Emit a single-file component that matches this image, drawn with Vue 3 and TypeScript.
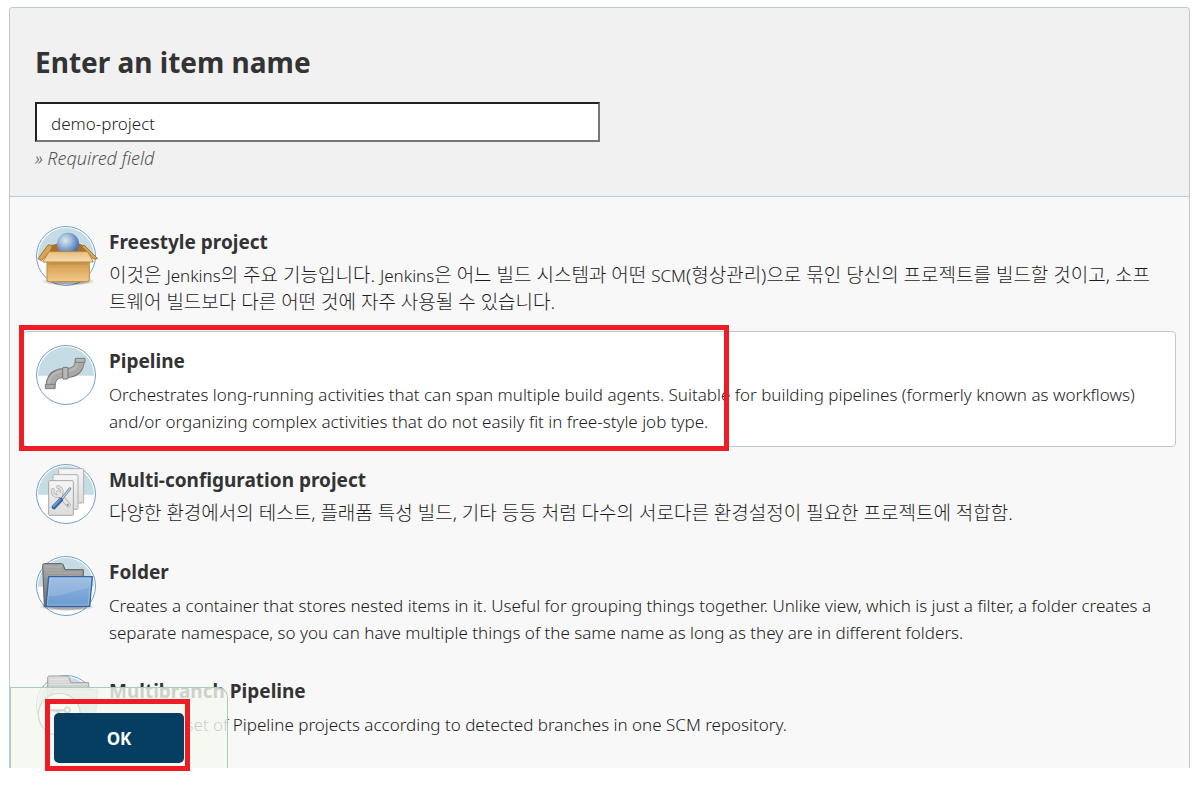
<script setup lang="ts">
import { ref } from 'vue'

type IconName = 'freestyle' | 'pipeline' | 'matrix' | 'folder' | 'multibranch'

interface ItemType {
  id: IconName
  title: string
  lang: 'en' | 'ko'
  description: string
}

const itemName = ref('demo-project')
const selected = ref<IconName>('pipeline')

const itemTypes: ItemType[] = [
  {
    id: 'freestyle',
    title: 'Freestyle project',
    lang: 'ko',
    description:
      '이것은 Jenkins의 주요 기능입니다. Jenkins은 어느 빌드 시스템과 어떤 SCM(형상관리)으로 묶인 당신의 프로젝트를 빌드할 것이고, 소프트웨어 빌드보다 다른 어떤 것에 자주 사용될 수 있습니다.',
  },
  {
    id: 'pipeline',
    title: 'Pipeline',
    lang: 'en',
    description:
      'Orchestrates long-running activities that can span multiple build agents. Suitable for building pipelines (formerly known as workflows) and/or organizing complex activities that do not easily fit in free-style job type.',
  },
  {
    id: 'matrix',
    title: 'Multi-configuration project',
    lang: 'ko',
    description:
      '다양한 환경에서의 테스트, 플래폼 특성 빌드, 기타 등등 처럼 다수의 서로다른 환경설정이 필요한 프로젝트에 적합함.',
  },
  {
    id: 'folder',
    title: 'Folder',
    lang: 'en',
    description:
      'Creates a container that stores nested items in it. Useful for grouping things together. Unlike view, which is just a filter, a folder creates a separate namespace, so you can have multiple things of the same name as long as they are in different folders.',
  },
  {
    id: 'multibranch',
    title: 'Multibranch Pipeline',
    lang: 'en',
    description: 'Creates a set of Pipeline projects according to detected branches in one SCM repository.',
  },
]

// Latin words inside Korean copy are set one step smaller than the Hangul.
const runs = (item: ItemType): string[] =>
  item.lang === 'ko' ? item.description.split(/([A-Za-z]+)/) : [item.description]
</script>

<template>
  <form class="panel" @submit.prevent>
    <header class="head">
      <h1><label for="item-name">Enter an item name</label></h1>
      <input id="item-name" v-model="itemName" class="name" type="text" aria-describedby="name-hint" />
      <p id="name-hint" class="hint">» Required field</p>
    </header>

    <ul class="types">
      <li v-for="item in itemTypes" :key="item.id" class="type" :class="{ active: item.id === selected }">
        <label class="choice">
          <input v-model="selected" class="radio" type="radio" name="mode" :value="item.id" />
          <svg class="icon" viewBox="0 0 180 180" aria-hidden="true">
            <defs>
              <linearGradient id="box-body" x1="0" y1="0" x2="0" y2="1">
                <stop offset="0" stop-color="#c8964c" />
                <stop offset="0.35" stop-color="#dda85c" />
                <stop offset="1" stop-color="#f0c98c" />
              </linearGradient>
              <linearGradient id="box-flap" x1="0" y1="0" x2="0" y2="1">
                <stop offset="0" stop-color="#e8be80" />
                <stop offset="1" stop-color="#f6dcb0" />
              </linearGradient>
              <radialGradient id="ball" cx="0.38" cy="0.35" r="0.68">
                <stop offset="0" stop-color="#e0e8ea" />
                <stop offset="0.4" stop-color="#9fbbdc" />
                <stop offset="1" stop-color="#3c6ab0" />
              </radialGradient>
              <linearGradient id="folder-front" x1="0" y1="0" x2="0" y2="1">
                <stop offset="0" stop-color="#92b5dd" />
                <stop offset="1" stop-color="#6b9bd0" />
              </linearGradient>
              <linearGradient id="folder-back" x1="0" y1="0" x2="0" y2="1">
                <stop offset="0" stop-color="#a8a8a8" />
                <stop offset="1" stop-color="#707070" />
              </linearGradient>
              <linearGradient id="page" x1="0" y1="0" x2="0" y2="1">
                <stop offset="0" stop-color="#f6f6f6" />
                <stop offset="1" stop-color="#dcdcdc" />
              </linearGradient>
              <linearGradient id="branch-folder" x1="0" y1="0" x2="0" y2="1">
                <stop offset="0" stop-color="#dedede" />
                <stop offset="1" stop-color="#a4a4a4" />
              </linearGradient>
              <radialGradient id="soft-shadow">
                <stop offset="0.6" stop-color="#000" stop-opacity="0.34" />
                <stop offset="1" stop-color="#000" stop-opacity="0" />
              </radialGradient>
            </defs>

            <circle cx="90" cy="90" r="89" fill="#fff" />
            <path d="M6 92a84 86 0 0 1 168 0z" fill="#c5dce4" />
            <circle cx="90" cy="90" r="88.5" fill="none" stroke="#71a0d2" stroke-width="3" />

            <g v-if="item.id === 'freestyle'" stroke-linejoin="round">
              <ellipse cx="97" cy="166" rx="80" ry="13" fill="url(#soft-shadow)" />
              <path d="M40 60L70 50H124L146 60L156 80H38z" fill="#a87028" />
              <path d="M36 57L6 98L16 104L42 76L50 58z" fill="#d8a45a" stroke="#a8742c" stroke-width="3" />
              <path d="M144 57L185 98L172 99L150 74L138 62z" fill="#d8a45a" stroke="#a8742c" stroke-width="3" />
              <circle cx="96" cy="53" r="33" fill="url(#ball)" />
              <path d="M33 106H160V160Q160 167 153 167H40Q33 167 33 160z" fill="url(#box-body)" stroke="#c08a3c" stroke-width="3" />
              <path d="M39 77H155L172 108H20z" fill="url(#box-flap)" stroke="#bd873a" stroke-width="3" />
              <path d="M40 114H154" stroke="#b07a30" stroke-width="4" opacity="0.4" />
            </g>

            <g v-else-if="item.id === 'pipeline'" fill="none">
              <path d="M43 130C44 98 54 87 82 84H94C122 82 131 68 132 42" stroke="#747474" stroke-width="30" />
              <path d="M43 127C44 99 56 88 82 84H94C122 81 131 67 132 44" stroke="#a9a9a9" stroke-width="25" />
              <path d="M37 124C38 94 52 80 82 78H94C116 76 125 63 126 46" stroke="#b8b8b8" stroke-width="6" />
              <path d="M28 118H57V131H28z" fill="#a8a8a8" stroke="#7c7c7c" stroke-width="3" />
              <path d="M118 40H147V52H118z" fill="#b5b5b5" stroke="#7c7c7c" stroke-width="3" />
              <rect x="80" y="67" width="16" height="35" rx="3" fill="#b8b8b8" stroke="#747474" stroke-width="3" />
            </g>

            <g v-else-if="item.id === 'matrix'">
              <rect x="68" y="14" width="75" height="103" rx="3" fill="url(#page)" stroke="#b0b0ae" stroke-width="3" />
              <rect x="51" y="32" width="75" height="104" rx="3" fill="url(#page)" stroke="#b0b0ae" stroke-width="3" />
              <rect x="38" y="50" width="74" height="104" rx="3" fill="url(#page)" stroke="#a6a6a4" stroke-width="3" />
              <g fill="none" stroke-linecap="round">
                <path d="M66 86L97 123" stroke="#a8a8a8" stroke-width="14" />
                <path d="M51 77A14 14 0 1 0 66 69" stroke="#a8a8a8" stroke-width="10" />
                <path d="M66 86L97 123" stroke="#e4e4e4" stroke-width="10" />
                <path d="M51 77A14 14 0 1 0 66 69" stroke="#e4e4e4" stroke-width="6" />
                <path d="M76 106L102 74" stroke="#6f8194" stroke-width="8" />
                <path d="M76 106L102 74" stroke="#c5d0da" stroke-width="4" />
                <path d="M54 129L74 108" stroke="#3a64a5" stroke-width="14" />
                <path d="M53 126L72 107" stroke="#7099cc" stroke-width="6" />
              </g>
              <circle cx="95" cy="122" r="3" fill="#8a8a8a" />
            </g>

            <g v-else-if="item.id === 'folder'" stroke-linejoin="round">
              <ellipse cx="93" cy="152" rx="84" ry="13" fill="url(#soft-shadow)" />
              <path d="M20 28Q20 23 25 23H77Q81 23 82 27L87 41H142V152H25z" fill="url(#folder-back)" stroke="#5d5d5d" stroke-width="3" />
              <path d="M26 33H75M27 42H80M28 51H137M28 60H137" stroke="#c2c2c2" stroke-width="2" opacity="0.7" />
              <path d="M38 62H169L161 151H30z" fill="url(#folder-front)" stroke="#3465a4" stroke-width="4" />
              <path d="M42 67H163L160 96C118 101 84 121 37 121z" fill="#fff" opacity="0.14" />
              <path d="M42 66H164L157 147H34z" fill="none" stroke="#c0d6ef" stroke-width="2" opacity="0.7" />
            </g>

            <g v-else stroke-linejoin="round">
              <path d="M35 8Q35 3 40 3H93Q97 3 99 8L105 23H158V118H35z" fill="url(#branch-folder)" stroke="#a2a2a2" stroke-width="3" />
              <path d="M40 13H94M40 21H98M40 29H154" stroke="#fff" stroke-width="2" opacity="0.5" />
              <path d="M48 43H185L178 130H40z" fill="#bfcfce" stroke="#9eaeae" stroke-width="3" />
              <circle cx="70" cy="118" r="63" fill="#fff" stroke="#696969" stroke-width="4" />
              <path d="M38 106H86M60 106Q70 110 76 134" fill="none" stroke="#555" stroke-width="7" />
              <circle cx="94" cy="105" r="8" fill="#fff" stroke="#555" stroke-width="5" />
              <circle cx="79" cy="139" r="8" fill="#fff" stroke="#555" stroke-width="5" />
            </g>
          </svg>
          <span class="copy">
            <span class="title">{{ item.title }}</span>
            <span class="desc" :class="item.lang" :lang="item.lang"><template
              v-for="(run, i) in runs(item)"
              :key="i"
            ><span v-if="i % 2" class="latin">{{ run }}</span><template v-else>{{ run }}</template></template></span>
          </span>
        </label>
        <span v-if="item.id === selected" class="mark mark-item" aria-hidden="true"></span>
      </li>
    </ul>

    <div class="footer">
      <button class="ok" type="submit">OK</button>
      <span class="mark mark-ok" aria-hidden="true"></span>
    </div>
  </form>
</template>

<style>
body {
  background: #fff;
}
</style>

<style scoped>
* {
  box-sizing: border-box;
}

.panel {
  position: relative;
  margin: 7px 9px 20px;
  border: 1px solid #bfc9cd;
  border-bottom: 0;
  border-radius: 4px 4px 0 0;
  background: #f8f8f8;
  color: #333;
  font-family: 'Noto Sans', 'Noto Sans CJK KR', sans-serif;
  font-size: 17px;
  line-height: 27px;
}

.head {
  padding: 34px 25px 24px;
  border-bottom: 1px solid #bfc9d2;
  border-radius: 3px 3px 0 0;
  background: #f1f1f1;
}

h1 {
  margin: 0 0 20px;
  font-size: 28px;
  line-height: 40px;
  font-weight: 700;
}

.name {
  display: block;
  width: 50%;
  max-width: 565px;
  height: 40px;
  padding: 2px 14px 0;
  border: 2px solid #767676;
  border-color: #212121 #767676 #767676 #212121;
  border-radius: 0;
  outline: 0;
  background: #fff;
  color: #222;
  font: inherit;
  font-weight: 300;
}

.hint {
  margin: 3px 0 0;
  color: #555;
  font-size: 18px;
  font-style: italic;
  font-weight: 300;
}

.types {
  display: flex;
  flex-direction: column;
  gap: 3px;
  margin: 0;
  padding: 15px 13px 18px;
  list-style: none;
}

.type {
  position: relative;
  border: 1px solid transparent;
  border-radius: 4px;
}

.type.active {
  border-color: #bfc9cd;
  background: #fff;
}

.choice {
  display: flex;
  gap: 13px;
  padding: 13px 12px 11px;
}

.radio {
  position: absolute;
  opacity: 0;
}

.icon {
  flex: none;
  width: 60px;
  height: 60px;
  overflow: visible;
}

.copy {
  display: flex;
  flex: 1;
  flex-direction: column;
  gap: 6px;
  padding-top: 3px;
}

.title {
  font-size: 19px;
  font-weight: 700;
}

.desc {
  color: #1c1c1c;
  font-weight: 300;
}

.desc.ko {
  font-size: 19px;
}

.desc .latin {
  font-size: 17px;
}

.footer {
  position: absolute;
  bottom: 0;
  left: 0;
  padding: 25px 43px 5px;
  border: 1px solid #a9cdbb;
  border-bottom: 0;
  border-radius: 0 10px 0 0;
  background: rgba(245, 249, 239, 0.8);
}

.ok {
  display: block;
  width: 130px;
  height: 50px;
  border: 0;
  border-radius: 5px;
  background: #063e61;
  color: #fff;
  font: inherit;
  font-weight: 700;
}

.mark {
  position: absolute;
  border: 5px solid #ee1c24;
  pointer-events: none;
}

.mark-item {
  top: -7px;
  bottom: -5px;
  left: -5px;
  width: 710px;
}

.mark-ok {
  top: 11px;
  right: 37px;
  bottom: -3px;
  left: 34px;
}
</style>
